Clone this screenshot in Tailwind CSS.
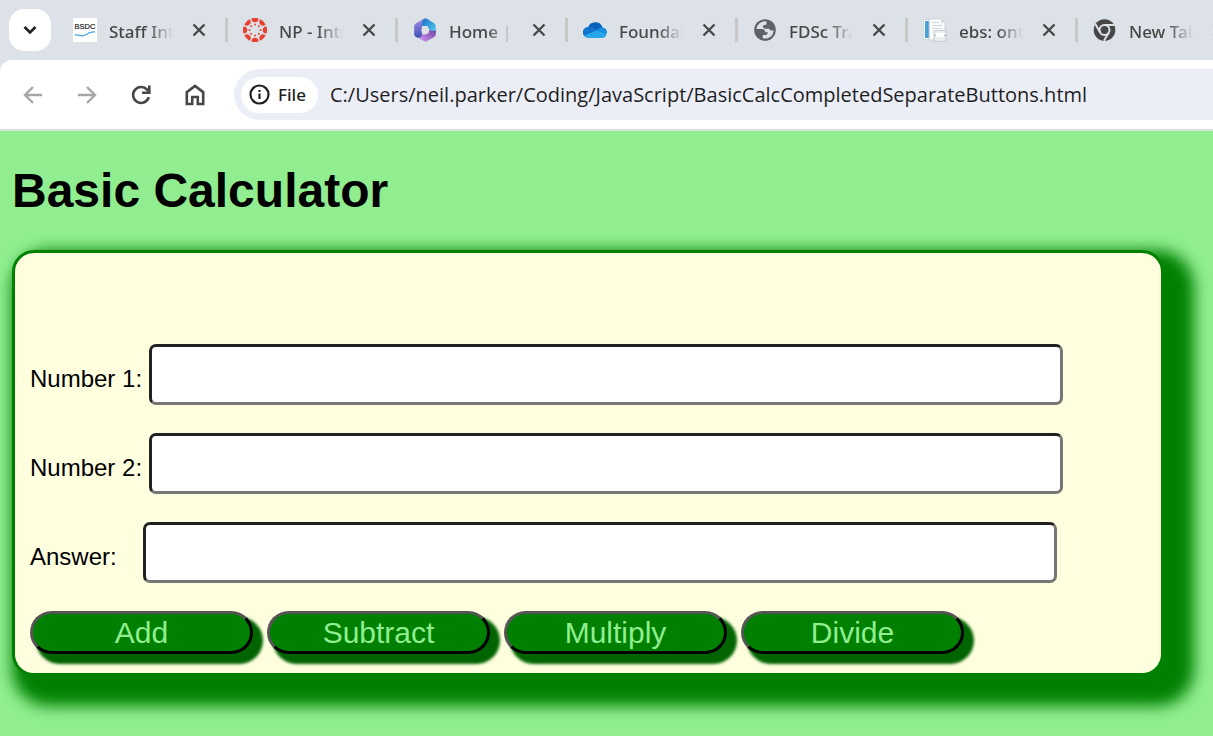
<!DOCTYPE html>
<html lang="en">
<head>
<meta charset="utf-8">
<meta name="viewport" content="width=device-width, initial-scale=1">
<title>Basic Calculator</title>
<script src="https://cdn.jsdelivr.net/npm/@tailwindcss/browser@4"></script>
</head>
<body class="flex min-h-screen flex-col overflow-x-hidden bg-[#90ee90] font-['Liberation_Sans',Arial,sans-serif] text-black">

<!-- Browser chrome -->
<header class="bg-[#dde1e8] font-['Noto_Sans','Segoe_UI',sans-serif]">
  <div class="flex h-[60px] items-center overflow-hidden pl-[9px]">
    <button type="button" aria-label="Search tabs" class="mr-[7px] flex size-[42px] shrink-0 items-center justify-center rounded-[15px] bg-white">
      <svg class="size-4" viewBox="0 0 16 16" fill="none" stroke="#1f1f1f" stroke-width="2.600"><path d="M2.500 5 8 10.500 13.500 5"/></svg>
    </button>
    <nav aria-label="Tabs" class="flex text-[17px] leading-6 font-medium text-[#474747]">
      <div class="flex w-[170px] shrink-0 items-center pl-[15px]">
        <svg class="size-6 shrink-0" viewBox="0 0 24 24"><path fill="#fff" d="M0 0h24v24H0z"/><text x="1.500" y="11" font-family="Liberation Sans" font-size="7.500" fill="#222" stroke="#222" stroke-width=".2">BSDC</text><path d="M2 17c4-1 6 2.500 10 0s6-3.500 10-3" fill="none" stroke="#4ba6dc" stroke-width="1.300"/></svg>
        <a href="#" class="ml-3 w-16 overflow-hidden pt-[3px] whitespace-nowrap mask-r-from-60%">Staff Intranet</a>
        <button type="button" aria-label="Close tab" class="ml-[18px]"><svg class="size-4" viewBox="0 0 16 16" stroke="#474747" stroke-width="2.300"><path d="m2.500 2.500 11 11m0-11-11 11"/></svg></button>
        <span class="ml-auto h-6 w-[3px] bg-[#c7c7c7]"></span>
      </div>
      <div class="flex w-[170px] shrink-0 items-center pl-[15px]">
        <svg class="size-6 shrink-0" viewBox="0 0 24 24" fill="#e8412f">
          <g id="seg"><path d="M8.400.5a12 12 0 0 1 7.200 0 3.600 3.800 0 0 1-7.200 0z"/><circle cx="12" cy="6.500" r="1"/></g>
          <use href="#seg" transform="rotate(45 12 12)"/><use href="#seg" transform="rotate(90 12 12)"/><use href="#seg" transform="rotate(135 12 12)"/><use href="#seg" transform="rotate(180 12 12)"/><use href="#seg" transform="rotate(225 12 12)"/><use href="#seg" transform="rotate(270 12 12)"/><use href="#seg" transform="rotate(315 12 12)"/>
        </svg>
        <a href="#" class="ml-3 w-16 overflow-hidden pt-[3px] whitespace-nowrap mask-r-from-60%">NP - Introduction</a>
        <button type="button" aria-label="Close tab" class="ml-[18px]"><svg class="size-4" viewBox="0 0 16 16" stroke="#474747" stroke-width="2.300"><path d="m2.500 2.500 11 11m0-11-11 11"/></svg></button>
        <span class="ml-auto h-6 w-[3px] bg-[#c7c7c7]"></span>
      </div>
      <div class="flex w-[170px] shrink-0 items-center pl-[15px]">
        <svg class="size-6 shrink-0" viewBox="0 0 24 24">
          <defs>
            <linearGradient id="m1" x1="0" y1="0" x2="0" y2="1"><stop stop-color="#a98be6"/><stop offset="1" stop-color="#3550b5"/></linearGradient>
            <linearGradient id="m2" x1="0" y1="0" x2="1" y2="1"><stop stop-color="#1c6fc9"/><stop offset="1" stop-color="#55d0f2"/></linearGradient>
            <linearGradient id="m3" x1="0" y1="1" x2="1" y2="0"><stop stop-color="#d59bf5"/><stop offset="1" stop-color="#6b3f9c"/></linearGradient>
          </defs>
          <path fill="url(#m1)" d="M11 .8 3 5.200Q1.200 6.300 1.200 8.200v8Q1.200 18 3 19l2 1q4 0 4-3.500V8L13 1z"/>
          <path fill="url(#m2)" d="M11 .8q1.500-.8 3 0l7 4.400q1.800 1 1.800 3V15l-8-4V8H9q-.5-5 2-7.200z"/>
          <path fill="url(#m3)" d="M22.800 12v4q0 2-1.500 3l-7 4q-1.800 1-3.500 0L5 19.800q4 0 4-3.300h3l3-2V11q5 3.500 7.800 1z"/>
          <circle cx="12.300" cy="12.300" r="3.900" fill="#dde1e8"/>
        </svg>
        <a href="#" class="ml-3 w-16 overflow-hidden pt-[3px] whitespace-nowrap mask-r-from-60%">Home | Microsoft</a>
        <button type="button" aria-label="Close tab" class="ml-[18px]"><svg class="size-4" viewBox="0 0 16 16" stroke="#474747" stroke-width="2.300"><path d="m2.500 2.500 11 11m0-11-11 11"/></svg></button>
        <span class="ml-auto h-6 w-[3px] bg-[#c7c7c7]"></span>
      </div>
      <div class="flex w-[170px] shrink-0 items-center pl-[15px]">
        <svg class="size-6 shrink-0" viewBox="0 0 24 24"><path fill="#0a62b8" d="M5 10a7.500 7.500 0 0 1 14.500-.5l-6 5z"/><path fill="#1175cf" d="M6 9.200q2-.6 4.500.8L19 15l-15 4.500A5.200 5.200 0 0 1 6 9.200z"/><path fill="#1590df" d="M13.500 12.500q2.500-3.500 6-3A5 5 0 0 1 24 15l-2 2z"/><path fill="#28a8ea" d="m1.500 17.500 12-5 10 4q-1 3.500-4.500 3.500H6q-3 0-4.500-2.500z"/></svg>
        <a href="#" class="ml-3 w-16 overflow-hidden pt-[3px] whitespace-nowrap mask-r-from-60%">Foundation</a>
        <button type="button" aria-label="Close tab" class="ml-[18px]"><svg class="size-4" viewBox="0 0 16 16" stroke="#474747" stroke-width="2.300"><path d="m2.500 2.500 11 11m0-11-11 11"/></svg></button>
        <span class="ml-auto h-6 w-[3px] bg-[#c7c7c7]"></span>
      </div>
      <div class="flex w-[170px] shrink-0 items-center pl-[15px]">
        <svg class="size-6 shrink-0" viewBox="0 0 24 24"><circle cx="12" cy="12" r="10.800" fill="#5f6368"/><path fill="#dde1e8" d="M13.500 3.500A8.600 8.600 0 0 0 3.500 11h5.500q3 .2 3.200 3.200h2.600q-.2 2.800-2.800 2.800h-2.200v3.300a8.600 8.600 0 0 0 10.800-7.800h-2.200q-1.800 0-2.200-1.800h-4.400q-1.800-.2-1.800-2.200 0-1.500 2-1.700h1.500z"/></svg>
        <a href="#" class="ml-3 w-16 overflow-hidden pt-[3px] whitespace-nowrap mask-r-from-60%">FDSc Training</a>
        <button type="button" aria-label="Close tab" class="ml-[18px]"><svg class="size-4" viewBox="0 0 16 16" stroke="#474747" stroke-width="2.300"><path d="m2.500 2.500 11 11m0-11-11 11"/></svg></button>
        <span class="ml-auto h-6 w-[3px] bg-[#c7c7c7]"></span>
      </div>
      <div class="flex w-[170px] shrink-0 items-center pl-[15px]">
        <svg class="size-6 shrink-0" viewBox="0 0 24 24"><path fill="#f4f6f8" stroke="#c9d0d8" stroke-width=".6" d="M.5 1.500h8v20h-8z"/><path fill="#4a9fd4" d="M2 3h3.800v17H2z"/><path fill="#fafbfc" stroke="#c3c9d0" stroke-width=".7" d="M6.500.8H18l4 4V22H6.500z"/><path fill="#d4d9df" d="M18 .8v4h4z"/><path stroke="#d3d7dc" d="M9 7.500h10M9 10.500h10M9 4.500h7"/><path fill="#eceff2" stroke="#b9c0c8" stroke-width=".8" d="M11 12.500h12v10.800H11z"/><path stroke="#aeb6be" stroke-width="1" d="M11 17.500h12"/><path fill="#fff" d="M13 15h8v4h-8z"/></svg>
        <a href="#" class="ml-3 w-16 overflow-hidden pt-[3px] whitespace-nowrap mask-r-from-60%">ebs: ontrack</a>
        <button type="button" aria-label="Close tab" class="ml-[18px]"><svg class="size-4" viewBox="0 0 16 16" stroke="#474747" stroke-width="2.300"><path d="m2.500 2.500 11 11m0-11-11 11"/></svg></button>
        <span class="ml-auto h-6 w-[3px] bg-[#c7c7c7]"></span>
      </div>
      <div class="flex w-[170px] shrink-0 items-center pl-[15px]">
        <svg class="size-6 shrink-0" viewBox="0 0 24 24"><circle cx="11.500" cy="12" r="10.800" fill="#474747"/><circle cx="11.500" cy="12" r="5" fill="none" stroke="#dde1e8" stroke-width="2"/><path d="M11.500 7h9.500M7.200 14.500 2.500 6.300M15.800 14.500l-4.800 8.300" stroke="#dde1e8" stroke-width="2"/></svg>
        <a href="#" class="ml-3 w-16 overflow-hidden pt-[3px] whitespace-nowrap mask-r-from-60%">New Tab</a>
        <button type="button" aria-label="Close tab" class="ml-[18px]"><svg class="size-4" viewBox="0 0 16 16" stroke="#474747" stroke-width="2.300"><path d="m2.500 2.500 11 11m0-11-11 11"/></svg></button>
      </div>
    </nav>
  </div>

  <div class="flex items-center rounded-tl-[12px] border-b-2 border-[#e0e0e0] bg-white py-[9px] pl-[6px]">
    <button type="button" aria-label="Back" class="flex w-[54px] shrink-0 justify-center"><svg class="size-6" viewBox="0 0 24 24" fill="none" stroke="#a6a6a6" stroke-width="2.400"><path d="M21 12H4.500M12 4l-8 8 8 8"/></svg></button>
    <button type="button" aria-label="Forward" class="flex w-[54px] shrink-0 justify-center"><svg class="size-6" viewBox="0 0 24 24" fill="none" stroke="#a6a6a6" stroke-width="2.400"><path d="M3 12h16.500M12 4l8 8-8 8"/></svg></button>
    <button type="button" aria-label="Reload" class="flex w-[54px] shrink-0 justify-center"><svg class="size-6" viewBox="0 0 24 24" fill="none" stroke="#474747" stroke-width="2.600"><path d="M19.800 14.200A8 8 0 1 1 18 6.500l1.500 1.700"/><path d="M20.300 2.500v7.200h-7.200"/></svg></button>
    <button type="button" aria-label="Home" class="flex w-[54px] shrink-0 justify-center"><svg class="size-6" viewBox="0 0 24 24" fill="none" stroke="#474747" stroke-width="2.600"><path d="M3.800 21V9.200L12 3l8.200 6.200V21h-5.400v-7H9.200v7z"/></svg></button>
    <div class="ml-3 flex h-[51px] min-w-0 flex-1 items-center rounded-l-full bg-[#ebeef7] pl-[7px]">
      <button type="button" class="flex h-9 w-[77px] shrink-0 items-center gap-2 rounded-full bg-white pl-2 text-[17px] font-medium text-[#1f1f1f]">
        <svg class="size-[21px]" viewBox="0 0 21 21" fill="none" stroke="#1f1f1f" stroke-width="2.200"><circle cx="10.500" cy="10.500" r="9"/><path d="M10.500 9.500v5.500M10.500 6v2"/></svg>
        File
      </button>
      <input type="text" aria-label="Address" value="C:/Users/neil.parker/Coding/JavaScript/BasicCalcCompletedSeparateButtons.html" class="ml-3 min-w-0 flex-1 bg-transparent font-['Open_Sans','Segoe_UI',sans-serif] text-[20px] text-[#1f1f1f] outline-none">
    </div>
  </div>
</header>

<!-- Calculator page -->
<main class="pt-8 pr-[49px] pb-12 pl-3">
  <h1 class="text-[48px] leading-[56px] font-bold">Basic Calculator</h1>
  <form class="mt-[31px] rounded-[22px] border-3 border-[#008000] bg-[#ffffe0] px-[15px] pt-[91px] pb-[19px] shadow-[15px_15px_15px_15px_#008000]">
    <div class="mb-7 flex items-center">
      <label for="n1" class="w-[119px] shrink-0 pt-2 text-[24px]">Number 1:</label>
      <input id="n1" type="text" class="h-[61px] w-[calc(80%+21px)] rounded-[7px] border-3 border-t-[#212121] border-r-[#767676] border-b-[#767676] border-l-[#212121] bg-white px-1 text-[30px]">
    </div>
    <div class="mb-7 flex items-center">
      <label for="n2" class="w-[119px] shrink-0 pt-2 text-[24px]">Number 2:</label>
      <input id="n2" type="text" class="h-[61px] w-[calc(80%+21px)] rounded-[7px] border-3 border-t-[#212121] border-r-[#767676] border-b-[#767676] border-l-[#212121] bg-white px-1 text-[30px]">
    </div>
    <div class="mb-7 flex items-center">
      <label for="ans" class="w-[113px] shrink-0 pt-2 text-[24px]">Answer:</label>
      <input id="ans" type="text" class="h-[61px] w-[calc(80%+21px)] rounded-[7px] border-3 border-t-[#212121] border-r-[#767676] border-b-[#767676] border-l-[#212121] bg-white px-1 text-[30px]">
    </div>
    <div class="flex flex-wrap gap-[14px] text-[30px] leading-9 text-[#90ee90]">
      <button type="button" class="h-[43px] w-[223px] rounded-[22px] border-3 border-t-[#555555] border-r-black border-b-black border-l-[#555555] bg-[#008000] shadow-[8px_8px_3px_2px_#006400]">Add</button>
      <button type="button" class="h-[43px] w-[223px] rounded-[22px] border-3 border-t-[#555555] border-r-black border-b-black border-l-[#555555] bg-[#008000] shadow-[8px_8px_3px_2px_#006400]">Subtract</button>
      <button type="button" class="h-[43px] w-[223px] rounded-[22px] border-3 border-t-[#555555] border-r-black border-b-black border-l-[#555555] bg-[#008000] shadow-[8px_8px_3px_2px_#006400]">Multiply</button>
      <button type="button" class="h-[43px] w-[223px] rounded-[22px] border-3 border-t-[#555555] border-r-black border-b-black border-l-[#555555] bg-[#008000] shadow-[8px_8px_3px_2px_#006400]">Divide</button>
    </div>
  </form>
</main>
</body>
</html>
